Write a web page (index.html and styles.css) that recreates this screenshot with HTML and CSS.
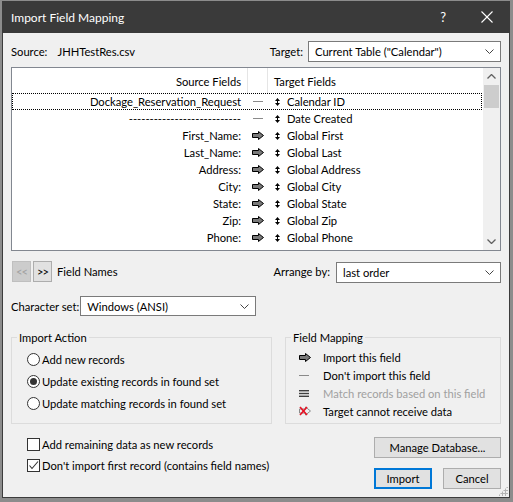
FILE: index.html
```html
<!DOCTYPE html>
<html lang="en">
<head>
  <meta charset="UTF-8">
  <meta name="viewport" content="width=device-width, initial-scale=1.0">
  <title>Import Field Mapping</title>
  <link rel="stylesheet" href="styles.css">
</head>
<body>
  <!-- shared icon shapes -->
  <svg class="defs" width="0" height="0">
    <defs>
      <symbol id="arrow" viewBox="0 0 12 9">
        <polygon points="0.5,2.5 6.5,2.5 6.5,0.5 11.5,4.5 6.5,8.5 6.5,6.5 0.5,6.5" fill="#7a7a7a" stroke="#000" stroke-width="1"/>
      </symbol>
      <symbol id="updown" viewBox="0 0 5 8">
        <polygon points="0,3 2.5,0 5,3" fill="#000"/>
        <polygon points="0,5 2.5,8 5,5" fill="#000"/>
        <line x1="2.5" y1="3" x2="2.5" y2="5" stroke="#000" stroke-width="1"/>
      </symbol>
      <symbol id="chev-down" viewBox="0 0 9 5">
        <polyline points="0.5,0.5 4.5,4.5 8.5,0.5" fill="none" stroke="#444" stroke-width="1"/>
      </symbol>
      <symbol id="chev-up" viewBox="0 0 9 5">
        <polyline points="0.5,4.5 4.5,0.5 8.5,4.5" fill="none" stroke="#606060" stroke-width="1.3"/>
      </symbol>
    </defs>
  </svg>

  <div class="window">
    <div class="titlebar">
      <span class="title">Import Field Mapping</span>
      <span class="help">?</span>
      <svg class="close" width="12" height="12" viewBox="0 0 12 12">
        <line x1="0.5" y1="0.5" x2="11.5" y2="11.5" stroke="#fff" stroke-width="1.1"/>
        <line x1="11.5" y1="0.5" x2="0.5" y2="11.5" stroke="#fff" stroke-width="1.1"/>
      </svg>
    </div>

    <div class="client">
      <div class="top-row">
        <div class="source">Source:<span class="file">JHHTestRes.csv</span></div>
        <div class="target">
          <span>Target:</span>
          <div class="select target-select">
            <span>Current Table ("Calendar")</span>
            <svg class="chev"><use href="#chev-down"/></svg>
          </div>
        </div>
      </div>

      <div class="listbox">
        <div class="list-main">
          <div class="list-header">
            <div class="col-src">Source Fields</div>
            <div class="col-arrow"></div>
            <div class="col-tgt">Target Fields</div>
          </div>
          <div class="row focused">
            <div class="col-src">Dockage_Reservation_Request</div>
            <div class="col-arrow"><span class="dash"></span></div>
            <div class="col-tgt"><svg class="ud"><use href="#updown"/></svg>Calendar ID</div>
          </div>
          <div class="row">
            <div class="col-src">---------------------------</div>
            <div class="col-arrow"><span class="dash"></span></div>
            <div class="col-tgt"><svg class="ud"><use href="#updown"/></svg>Date Created</div>
          </div>
          <div class="row">
            <div class="col-src">First_Name:</div>
            <div class="col-arrow"><svg class="arr"><use href="#arrow"/></svg></div>
            <div class="col-tgt"><svg class="ud"><use href="#updown"/></svg>Global First</div>
          </div>
          <div class="row">
            <div class="col-src">Last_Name:</div>
            <div class="col-arrow"><svg class="arr"><use href="#arrow"/></svg></div>
            <div class="col-tgt"><svg class="ud"><use href="#updown"/></svg>Global Last</div>
          </div>
          <div class="row">
            <div class="col-src">Address:</div>
            <div class="col-arrow"><svg class="arr"><use href="#arrow"/></svg></div>
            <div class="col-tgt"><svg class="ud"><use href="#updown"/></svg>Global Address</div>
          </div>
          <div class="row">
            <div class="col-src">City:</div>
            <div class="col-arrow"><svg class="arr"><use href="#arrow"/></svg></div>
            <div class="col-tgt"><svg class="ud"><use href="#updown"/></svg>Global City</div>
          </div>
          <div class="row">
            <div class="col-src">State:</div>
            <div class="col-arrow"><svg class="arr"><use href="#arrow"/></svg></div>
            <div class="col-tgt"><svg class="ud"><use href="#updown"/></svg>Global State</div>
          </div>
          <div class="row">
            <div class="col-src">Zip:</div>
            <div class="col-arrow"><svg class="arr"><use href="#arrow"/></svg></div>
            <div class="col-tgt"><svg class="ud"><use href="#updown"/></svg>Global Zip</div>
          </div>
          <div class="row">
            <div class="col-src">Phone:</div>
            <div class="col-arrow"><svg class="arr"><use href="#arrow"/></svg></div>
            <div class="col-tgt"><svg class="ud"><use href="#updown"/></svg>Global Phone</div>
          </div>
        </div>
        <div class="scrollbar">
          <div class="sb-btn"><svg class="sb-chev"><use href="#chev-up"/></svg></div>
          <div class="sb-thumb"></div>
          <div class="sb-track"></div>
          <div class="sb-btn"><svg class="sb-chev down"><use href="#chev-up"/></svg></div>
        </div>
      </div>

      <div class="nav-row">
        <div class="nav-left">
          <button class="nav-btn disabled">&lt;&lt;</button>
          <button class="nav-btn">&gt;&gt;</button>
          <span class="nav-label">Field Names</span>
        </div>
        <div class="arrange">
          <span>Arrange by:</span>
          <div class="select arrange-select">
            <span>last order</span>
            <svg class="chev"><use href="#chev-down"/></svg>
          </div>
        </div>
      </div>

      <div class="charset-row">
        <span>Character set:</span>
        <div class="select charset-select">
          <span>Windows (ANSI)</span>
          <svg class="chev"><use href="#chev-down"/></svg>
        </div>
      </div>

      <div class="groups">
        <fieldset class="group import-action">
          <legend>Import Action</legend>
          <div class="opt"><span class="radio"></span>Add new records</div>
          <div class="opt"><span class="radio on"></span>Update existing records in found set</div>
          <div class="opt"><span class="radio"></span>Update matching records in found set</div>
        </fieldset>
        <fieldset class="group field-mapping">
          <legend>Field Mapping</legend>
          <div class="key">
            <span class="key-ico"><svg class="arr"><use href="#arrow"/></svg></span>Import this field
          </div>
          <div class="key">
            <span class="key-ico"><span class="dash"></span></span>Don't import this field
          </div>
          <div class="key muted">
            <span class="key-ico">
              <svg width="10" height="7" viewBox="0 0 10 7">
                <rect x="0" y="0" width="10" height="1.4" fill="#404040"/>
                <rect x="0" y="2.8" width="10" height="1.4" fill="#404040"/>
                <rect x="0" y="5.6" width="10" height="1.4" fill="#404040"/>
              </svg>
            </span>Match records based on this field
          </div>
          <div class="key">
            <span class="key-ico">
              <svg width="12" height="10" viewBox="0 0 12 10">
                <polygon points="0.5,3 6.5,3 6.5,1 11.5,5 6.5,9 6.5,7 0.5,7" fill="none" stroke="#8a8a8a" stroke-width="1"/>
                <line x1="1" y1="1" x2="8" y2="9" stroke="#e81123" stroke-width="1.7"/>
                <line x1="8" y1="1" x2="1" y2="9" stroke="#e81123" stroke-width="1.7"/>
              </svg>
            </span>Target cannot receive data
          </div>
        </fieldset>
      </div>

      <div class="bottom">
        <div class="checks">
          <div class="opt"><span class="check"></span>Add remaining data as new records</div>
          <div class="opt">
            <span class="check">
              <svg width="11" height="11" viewBox="0 0 11 11"><polyline points="1.5,5.5 4,8.5 10,1.5" fill="none" stroke="#333" stroke-width="1.1"/></svg>
            </span>Don't import first record (contains field names)
          </div>
        </div>
        <div class="buttons">
          <button class="btn manage">Manage Database...</button>
          <div class="btn-pair">
            <button class="btn default">Import</button>
            <button class="btn">Cancel</button>
          </div>
        </div>
      </div>
    </div>

    <div class="grip"></div>
  </div>
</body>
</html>
```

FILE: styles.css
```css
body {
  margin: 0;
  background: #8c8c8c;
  font-family: Lato, 'Liberation Sans', sans-serif;
  font-size: 11.2px;
  color: #000;
}

.defs {
  position: absolute;
}

.window {
  position: relative;
  width: 508px;
  height: 497px;
  margin: 1px 0 0 2px;
  box-sizing: border-box;
  border: 1px solid #3c3c3c;
  border-top: none;
  background: #f0f0f0;
}

.titlebar {
  height: 32px;
  margin: 0 -1px;
  background: #3a3a3a;
  display: flex;
  align-items: center;
  color: #fff;
  font-size: 12px;
}
.title {
  margin-left: 9px;
  flex: 1;
}
.help {
  font-size: 13px;
  margin-right: 35px;
}
.close {
  margin-right: 17px;
}

.client {
  padding: 8px 8px 0 8px;
}

/* selects */
.select {
  box-sizing: border-box;
  height: 21px;
  background: #fff;
  border: 1px solid #7a7a7a;
  display: flex;
  align-items: center;
  justify-content: space-between;
  padding: 0 6px 0 6px;
}
.chev {
  width: 9px;
  height: 5px;
}

.top-row {
  height: 21px;
  display: flex;
  justify-content: space-between;
  align-items: center;
}
.file {
  margin-left: 10px;
}
.target {
  display: flex;
  align-items: center;
  gap: 5px;
}
.target-select {
  width: 193px;
}

/* list box */
.listbox {
  margin-top: 5px;
  height: 184px;
  box-sizing: border-box;
  border: 1px solid #828790;
  background: #fff;
  display: flex;
  overflow: hidden;
}
.list-main {
  flex: 1;
}
.list-header {
  height: 25px;
  display: flex;
  align-items: stretch;
}
.list-header > div {
  display: flex;
  align-items: center;
  padding-top: 1px;
}
.list-header .col-src {
  justify-content: flex-end;
}
.list-header .col-arrow {
  border-left: 1px solid #e5e5e5;
  border-right: 1px solid #e5e5e5;
  box-sizing: border-box;
}
.list-header .col-tgt {
  padding-left: 6px;
}
.col-src {
  width: 235px;
  box-sizing: border-box;
  padding-right: 6px;
  text-align: right;
}
.col-arrow {
  width: 21px;
  display: flex;
  justify-content: center;
  align-items: center;
}
.col-tgt {
  flex: 1;
  display: flex;
  align-items: center;
  padding-left: 7px;
}
.row {
  height: 17px;
  display: flex;
  align-items: center;
  box-sizing: border-box;
  border: 1px dotted transparent;
  margin-right: 1px;
}
.row.focused {
  border-color: #000;
}
.row .col-src {
  width: 234px;
}
.dash {
  display: block;
  width: 10px;
  height: 1px;
  background: #8a8a8a;
}
.arr {
  width: 12px;
  height: 9px;
}
.ud {
  width: 5px;
  height: 8px;
  margin-right: 7px;
}

.scrollbar {
  width: 17px;
  display: flex;
  flex-direction: column;
  background: #f0f0f0;
}
.sb-btn {
  height: 17px;
  display: flex;
  align-items: center;
  justify-content: center;
}
.sb-chev {
  width: 9px;
  height: 5px;
}
.sb-chev.down {
  transform: rotate(180deg);
}
.sb-thumb {
  height: 23px;
  margin: 0 1px;
  background: #cdcdcd;
}
.sb-track {
  flex: 1;
}

/* nav row */
.nav-row {
  margin-top: 10px;
  height: 21px;
  display: flex;
  justify-content: space-between;
  align-items: center;
}
.nav-left {
  display: flex;
  align-items: center;
  padding-left: 1px;
}
.nav-btn {
  width: 19px;
  height: 21px;
  padding: 0;
  margin-right: 2px;
  font: inherit;
  background: #e1e1e1;
  border: 1px solid #adadad;
  color: #000;
  letter-spacing: -1px;
}
.nav-btn.disabled {
  background: #cccccc;
  border-color: #bfbfbf;
  color: #a0a0a0;
}
.nav-label {
  margin-left: 3px;
}
.arrange {
  display: flex;
  align-items: center;
  gap: 6px;
}
.arrange-select {
  width: 165px;
  margin-top: 2px;
}

.charset-row {
  margin-top: 14px;
  display: flex;
  align-items: center;
}
.charset-select {
  width: 176px;
  height: 20px;
  margin-left: 1px;
}

/* group boxes */
.groups {
  margin-top: 14px;
  display: flex;
  justify-content: space-between;
}
.group {
  margin: 0;
  height: 94px;
  box-sizing: border-box;
  border: 1px solid #dcdcdc;
  padding: 3px 0 0 0;
}
.group legend {
  padding: 0 2px;
  line-height: 15px;
}
.import-action {
  width: 261px;
  padding-left: 15px;
}
.import-action legend {
  margin-left: -10px;
}
.field-mapping {
  width: 216px;
  padding-left: 13px;
}
.field-mapping legend {
  margin-left: -8px;
}
.opt {
  height: 22px;
  display: flex;
  align-items: center;
}
.radio {
  width: 13px;
  height: 13px;
  box-sizing: border-box;
  border: 1px solid #333;
  border-radius: 50%;
  background: #fff;
  margin-right: 2px;
  display: flex;
  align-items: center;
  justify-content: center;
}
.radio.on::after {
  content: "";
  width: 7px;
  height: 7px;
  border-radius: 50%;
  background: #333;
}
.key {
  height: 18px;
  display: flex;
  align-items: center;
}
.key.muted {
  color: #a0a0a0;
}
.key-ico {
  width: 24px;
  display: flex;
  align-items: center;
}

/* bottom */
.bottom {
  margin-top: 10px;
  display: flex;
  justify-content: space-between;
}
.checks {
  padding-left: 16px;
}
.opt .check {
  width: 13px;
  height: 13px;
  box-sizing: border-box;
  border: 1px solid #333;
  background: #fff;
  margin-right: 2px;
  display: flex;
  align-items: center;
  justify-content: center;
}
.checks .opt {
  height: 21px;
}
.buttons {
  padding-top: 3px;
  width: 127px;
}
.btn {
  height: 21px;
  box-sizing: border-box;
  font: inherit;
  color: #000;
  background: #e1e1e1;
  border: 1px solid #adadad;
  padding: 0;
}
.btn.manage {
  width: 127px;
  display: block;
}
.btn-pair {
  margin-top: 10px;
  display: flex;
  justify-content: space-between;
}
.btn-pair .btn {
  width: 58px;
}
.btn.default {
  border: 2px solid #0078d7;
}

.grip {
  position: absolute;
  right: 1px;
  bottom: 1px;
  width: 10px;
  height: 10px;
  background:
    radial-gradient(circle, #b4b4b4 1px, transparent 1.2px) 0 0 / 3px 3px;
  clip-path: polygon(100% 0, 100% 100%, 0 100%);
}
```
